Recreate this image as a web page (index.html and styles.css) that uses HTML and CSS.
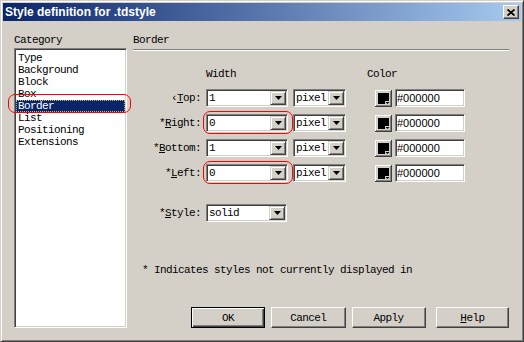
FILE: index.html
```html
<!DOCTYPE html>
<html lang="en">
<head>
  <meta charset="UTF-8">
  <title>Style definition for .tdstyle</title>
  <link rel="stylesheet" href="styles.css">
</head>
<body>
  <div class="dialog">
    <div class="titlebar">
      <span class="title">Style definition for .tdstyle</span>
      <span class="close">
        <svg width="8" height="7" viewBox="0 0 8 7"><path d="M0.5 0.5 L7.5 6.5 M7.5 0.5 L0.5 6.5" stroke="#000" stroke-width="1.8"/></svg>
      </span>
    </div>

    <div class="content">
      <div class="category">
        <div class="caption">Category</div>
        <ul class="list sunken">
          <li>Type</li>
          <li>Background</li>
          <li>Block</li>
          <li>Box</li>
          <li class="selected">Border<span class="mark"></span></li>
          <li>List</li>
          <li>Positioning</li>
          <li>Extensions</li>
        </ul>
      </div>

      <div class="panel">
        <div class="heading">Border</div>

        <div class="head-row">
          <span class="head-width">Width</span>
          <span>Color</span>
        </div>

        <div class="row">
          <span class="label">&lsaquo;<u>T</u>op:</span>
          <div class="combo sunken size"><span class="val">1</span><span class="drop"><svg width="7" height="4"><path d="M0 0h7l-3.5 4z"/></svg></span></div>
          <div class="combo sunken unit"><span class="val">pixel</span><span class="drop"><svg width="7" height="4"><path d="M0 0h7l-3.5 4z"/></svg></span></div>
          <span class="swatch"><svg width="17" height="17" viewBox="0 0 17 17"><rect width="17" height="17" fill="#404040"/><rect width="16" height="16" fill="#fff"/><rect x="1" y="1" width="15" height="15" fill="#808080"/><rect x="1" y="1" width="14" height="14" fill="#d4d0c8"/><path d="M3 3h11v8h-4v3H3z"/><path d="M10.5 12h4l-2 2z"/></svg></span>
          <span class="hex sunken">#000000</span>
        </div>

        <div class="row">
          <span class="label">*<u>R</u>ight:</span>
          <div class="combo sunken size"><span class="val">0</span><span class="drop"><svg width="7" height="4"><path d="M0 0h7l-3.5 4z"/></svg></span><span class="mark"></span></div>
          <div class="combo sunken unit"><span class="val">pixel</span><span class="drop"><svg width="7" height="4"><path d="M0 0h7l-3.5 4z"/></svg></span></div>
          <span class="swatch"><svg width="17" height="17" viewBox="0 0 17 17"><rect width="17" height="17" fill="#404040"/><rect width="16" height="16" fill="#fff"/><rect x="1" y="1" width="15" height="15" fill="#808080"/><rect x="1" y="1" width="14" height="14" fill="#d4d0c8"/><path d="M3 3h11v8h-4v3H3z"/><path d="M10.5 12h4l-2 2z"/></svg></span>
          <span class="hex sunken">#000000</span>
        </div>

        <div class="row">
          <span class="label">*<u>B</u>ottom:</span>
          <div class="combo sunken size"><span class="val">1</span><span class="drop"><svg width="7" height="4"><path d="M0 0h7l-3.5 4z"/></svg></span></div>
          <div class="combo sunken unit"><span class="val">pixel</span><span class="drop"><svg width="7" height="4"><path d="M0 0h7l-3.5 4z"/></svg></span></div>
          <span class="swatch"><svg width="17" height="17" viewBox="0 0 17 17"><rect width="17" height="17" fill="#404040"/><rect width="16" height="16" fill="#fff"/><rect x="1" y="1" width="15" height="15" fill="#808080"/><rect x="1" y="1" width="14" height="14" fill="#d4d0c8"/><path d="M3 3h11v8h-4v3H3z"/><path d="M10.5 12h4l-2 2z"/></svg></span>
          <span class="hex sunken">#000000</span>
        </div>

        <div class="row">
          <span class="label">*<u>L</u>eft:</span>
          <div class="combo sunken size"><span class="val">0</span><span class="drop"><svg width="7" height="4"><path d="M0 0h7l-3.5 4z"/></svg></span><span class="mark"></span></div>
          <div class="combo sunken unit"><span class="val">pixel</span><span class="drop"><svg width="7" height="4"><path d="M0 0h7l-3.5 4z"/></svg></span></div>
          <span class="swatch"><svg width="17" height="17" viewBox="0 0 17 17"><rect width="17" height="17" fill="#404040"/><rect width="16" height="16" fill="#fff"/><rect x="1" y="1" width="15" height="15" fill="#808080"/><rect x="1" y="1" width="14" height="14" fill="#d4d0c8"/><path d="M3 3h11v8h-4v3H3z"/><path d="M10.5 12h4l-2 2z"/></svg></span>
          <span class="hex sunken">#000000</span>
        </div>

        <div class="row style-row">
          <span class="label">*<u>S</u>tyle:</span>
          <div class="combo sunken style"><span class="val">solid</span><span class="drop"><svg width="7" height="4"><path d="M0 0h7l-3.5 4z"/></svg></span></div>
        </div>

        <p class="note">* Indicates styles not currently displayed in</p>

        <div class="buttons">
          <button class="btn default">OK</button>
          <button class="btn">Cancel</button>
          <button class="btn">Apply</button>
          <button class="btn help"><u>H</u>elp</button>
        </div>
      </div>
    </div>
  </div>
</body>
</html>
```

FILE: styles.css
```css
body {
  margin: 0;
  font-family: 'Liberation Mono', monospace;
  font-size: 11px;
  letter-spacing: -0.6px;
  color: black;
  background: #d4d0c8;
}

.dialog {
  width: 524px;
  height: 342px;
  box-sizing: border-box;
  background: #d4d0c8;
  border: 1px solid;
  border-color: #d4d0c8 #404040 #404040 #d4d0c8;
  box-shadow: inset 1px 1px #fff, inset -1px -1px #808080;
  padding: 2px;
  display: flex;
  flex-direction: column;
}

.titlebar {
  height: 18px;
  flex-shrink: 0;
  display: flex;
  align-items: center;
  justify-content: space-between;
  padding: 0 2px;
  background: linear-gradient(to right, #0a246a, #a6caf0);
}

.title {
  color: white;
  font: bold 12px 'Liberation Sans', sans-serif;
  letter-spacing: 0;
}

.close {
  width: 16px;
  height: 14px;
  box-sizing: border-box;
  background: #d4d0c8;
  border: 1px solid;
  border-color: #fff #404040 #404040 #fff;
  box-shadow: inset -1px -1px #808080;
  display: flex;
  align-items: center;
  justify-content: center;
}

.content {
  flex: 1;
  display: flex;
  padding: 13px 0 0 11px;
}

.sunken {
  border: 1px solid;
  border-color: #808080 #fff #fff #808080;
  box-shadow: inset 1px 1px #404040, inset -1px -1px #d4d0c8;
  background: white;
}

/* category list */
.category {
  width: 113px;
}

.caption {
  line-height: 12px;
  margin-bottom: 2px;
}

.list {
  margin: 0;
  padding: 3px 1px 1px;
  list-style: none;
  height: 280px;
  box-sizing: border-box;
}

.list li {
  line-height: 12px;
  padding-left: 2px;
  position: relative;
}

.list li.selected {
  background: #0a246a;
  color: white;
  outline: 1px dotted #c9b77a;
  outline-offset: -1px;
}

.mark {
  position: absolute;
  border: 1.5px solid #f00;
  border-radius: 7px;
  pointer-events: none;
}

.list .mark {
  left: -8px;
  right: -6px;
  top: -6px;
  bottom: -1px;
}

/* border panel */
.panel {
  width: 376px;
  margin-left: 6px;
  display: flex;
  flex-direction: column;
}

.heading {
  line-height: 12px;
  padding-bottom: 3px;
  border-bottom: 1px solid #808080;
  box-shadow: 0 1px #fff;
}

.head-row {
  margin-top: 18px;
  line-height: 12px;
  padding-left: 73px;
  display: flex;
}

.head-width {
  width: 161px;
}

.row {
  display: flex;
  align-items: center;
  height: 18px;
  margin-top: 7px;
}

.head-row + .row {
  margin-top: 9px;
}

.row.style-row {
  margin-top: 22px;
}

.label {
  width: 68px;
  margin-right: 5px;
  text-align: right;
}

.combo {
  position: relative;
  display: flex;
  height: 18px;
  box-sizing: border-box;
  padding: 1px;
}

.combo.size { width: 82px; }
.combo.unit { width: 53px; margin-left: 5px; }
.combo.style { width: 81px; }

.combo .val {
  flex: 1;
  line-height: 14px;
  padding-left: 1px;
}

.combo .mark {
  left: -4px;
  right: -6px;
  top: -4px;
  bottom: -3px;
}

.drop {
  width: 16px;
  height: 14px;
  box-sizing: border-box;
  background: #d4d0c8;
  border: 1px solid;
  border-color: #d4d0c8 #404040 #404040 #d4d0c8;
  box-shadow: inset 1px 1px #fff, inset -1px -1px #808080;
  display: flex;
  align-items: center;
  justify-content: center;
}

.drop svg {
  display: block;
}

.swatch {
  margin-left: 29px;
  height: 17px;
}

.swatch svg {
  display: block;
}

.hex {
  width: 70px;
  height: 18px;
  margin-left: 3px;
  box-sizing: border-box;
  padding-left: 1px;
  font: 11px 'Liberation Sans', sans-serif;
  letter-spacing: 0;
  line-height: 16px;
}

.note {
  margin: 42px 0 0;
  padding-left: 9px;
  line-height: 12px;
}

.buttons {
  margin-top: 31px;
  padding-left: 58px;
  display: flex;
}

.btn {
  width: 75px;
  height: 21px;
  margin-left: 6px;
  padding: 0;
  box-sizing: border-box;
  background: #d4d0c8;
  border: 1px solid;
  border-color: #fff #404040 #404040 #fff;
  box-shadow: inset -1px -1px #808080;
  font: inherit;
  letter-spacing: inherit;
  color: black;
}

.btn.default {
  margin-left: 0;
  border-color: #000;
  box-shadow: inset 1px 1px #fff, inset -1px -1px #404040, inset -2px -2px #808080;
}

.btn.help {
  width: 74px;
  margin-left: 10px;
}
```
